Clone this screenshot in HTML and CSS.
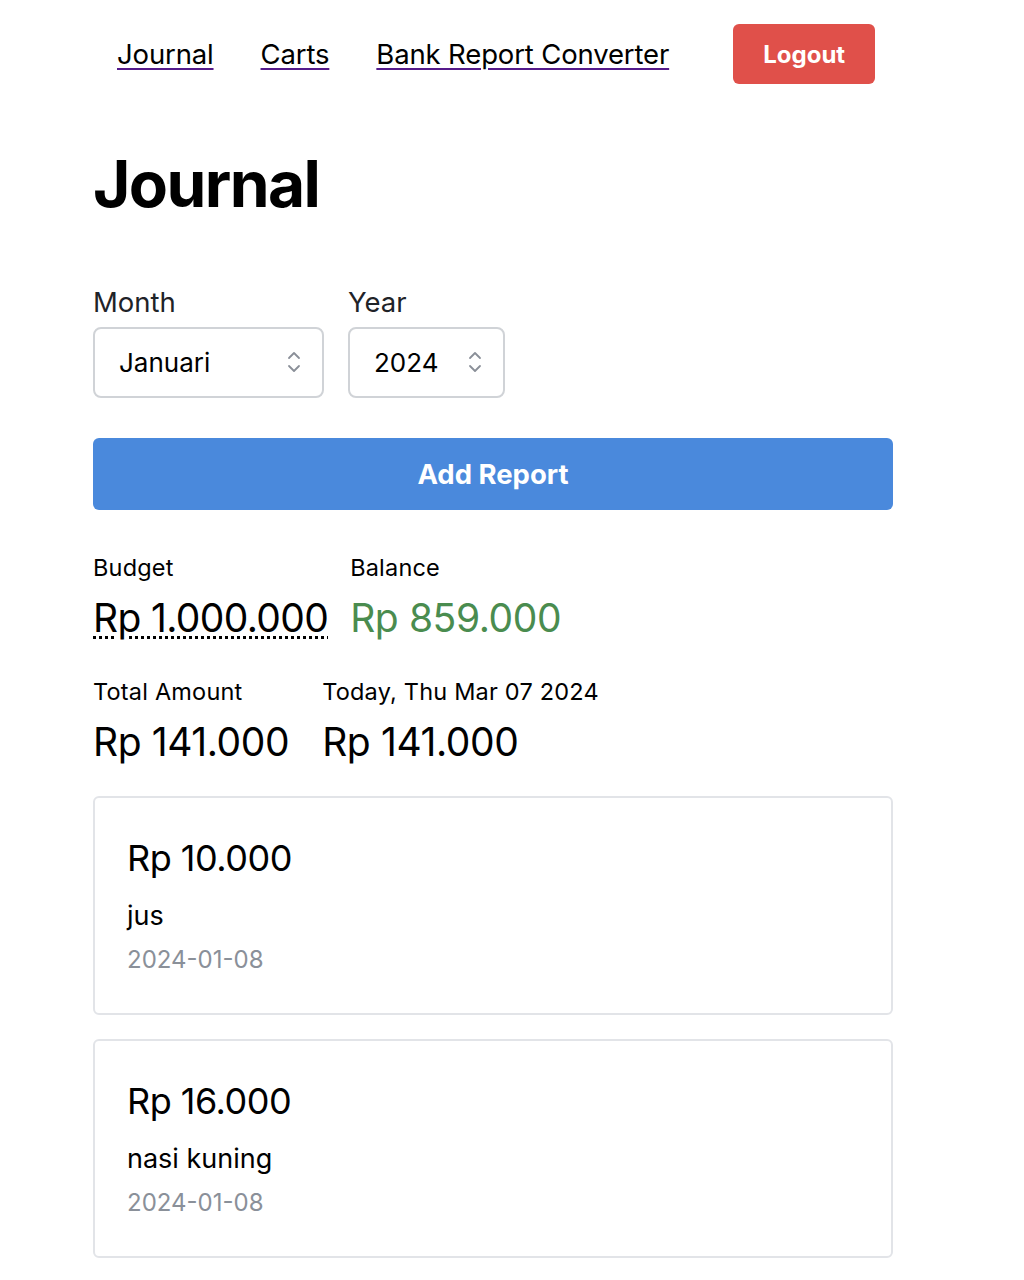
FILE: index.html
```html
<!DOCTYPE html>
<html lang="id">
<head>
    <meta charset="UTF-8">
    <meta name="viewport" content="width=device-width, initial-scale=1.0">
    <title>Journal</title>
    <link rel="stylesheet" href="styles.css">
</head>
<body>
    <div class="container">
        <nav class="nav">
            <a href="#journal" class="nav-link">Journal</a>
            <a href="#carts" class="nav-link">Carts</a>
            <a href="#converter" class="nav-link">Bank Report Converter</a>
            <button class="btn-logout">Logout</button>
        </nav>

        <h1 class="title">Journal</h1>

        <div class="filters">
            <div class="field">
                <label class="field-label">Month</label>
                <div class="select month">
                    <span>Januari</span>
                    <svg class="chevrons" width="14" height="24" viewBox="0 0 14 24" fill="none" stroke="#8a8f98" stroke-width="1.8" stroke-linecap="round" stroke-linejoin="round">
                        <polyline points="2,8 7,3 12,8"/>
                        <polyline points="2,16 7,21 12,16"/>
                    </svg>
                </div>
            </div>
            <div class="field">
                <label class="field-label">Year</label>
                <div class="select year">
                    <span>2024</span>
                    <svg class="chevrons" width="14" height="24" viewBox="0 0 14 24" fill="none" stroke="#8a8f98" stroke-width="1.8" stroke-linecap="round" stroke-linejoin="round">
                        <polyline points="2,8 7,3 12,8"/>
                        <polyline points="2,16 7,21 12,16"/>
                    </svg>
                </div>
            </div>
        </div>

        <button class="btn-add">Add Report</button>

        <div class="stats">
            <div class="stat">
                <div class="stat-label">Budget</div>
                <div class="stat-value budget">Rp 1.000.000</div>
            </div>
            <div class="stat">
                <div class="stat-label">Balance</div>
                <div class="stat-value balance">Rp 859.000</div>
            </div>
        </div>

        <div class="stats totals">
            <div class="stat">
                <div class="stat-label">Total Amount</div>
                <div class="stat-value">Rp 141.000</div>
            </div>
            <div class="stat">
                <div class="stat-label">Today, Thu Mar 07 2024</div>
                <div class="stat-value">Rp 141.000</div>
            </div>
        </div>

        <div class="card">
            <div class="card-amount">Rp 10.000</div>
            <div class="card-name">jus</div>
            <div class="card-date">2024-01-08</div>
        </div>

        <div class="card">
            <div class="card-amount">Rp 16.000</div>
            <div class="card-name">nasi kuning</div>
            <div class="card-date">2024-01-08</div>
        </div>
    </div>
</body>
</html>
```

FILE: styles.css
```css
* {
    margin: 0;
    padding: 0;
    box-sizing: border-box;
}

body {
    font-family: Inter, 'Noto Sans', sans-serif;
    background: white;
    color: #000;
}

.container {
    width: 800px;
    margin-left: 93px;
}

.nav {
    display: flex;
    align-items: center;
    padding: 24px 0 0 24px;
}

.nav-link {
    font-size: 27.5px;
    color: #000;
    text-decoration: underline;
    text-decoration-color: #551a8b;
    text-decoration-thickness: 2px;
    text-underline-offset: 4px;
    margin-right: 47px;
    letter-spacing: -0.15px;
}

.btn-logout {
    margin-left: 17px;
    width: 142px;
    height: 60px;
    background: #e0504a;
    color: white;
    border: none;
    border-radius: 6px;
    font-family: inherit;
    font-size: 24px;
    font-weight: 700;
}

.title {
    font-size: 64px;
    font-weight: 700;
    letter-spacing: -1.6px;
    margin-top: 62px;
    line-height: 1.2;
}

.filters {
    display: flex;
    gap: 24px;
    margin-top: 62px;
}

.field-label {
    display: block;
    font-size: 27.5px;
    color: #1f2328;
    margin-bottom: 8px;
}

.select {
    display: flex;
    align-items: center;
    justify-content: space-between;
    height: 71px;
    padding: 0 21px 0 24px;
    border: 2px solid #d0d3d7;
    border-radius: 8px;
    font-size: 26px;
}

.select.month { width: 231px; }
.select.year { width: 157px; }

.btn-add {
    display: block;
    width: 800px;
    height: 72px;
    margin-top: 40px;
    background: #4a89dc;
    color: white;
    border: none;
    border-radius: 6px;
    font-family: inherit;
    font-size: 27.5px;
    font-weight: 700;
}

.stats {
    display: flex;
    gap: 22px;
    margin-top: 43px;
}

.stats.totals {
    gap: 33px;
    margin-top: 36px;
}

.stat-label {
    font-size: 23.5px;
    letter-spacing: 0.2px;
}

.stat-value {
    font-size: 39px;
    margin-top: 12px;
    letter-spacing: -0.4px;
}

.stat-value.budget {
    letter-spacing: -0.65px;
    text-decoration: underline dotted;
    text-decoration-thickness: 3px;
    text-underline-offset: 4px;
}

.stat-value.balance {
    color: #4a8c4f;
}

.card {
    border: 2px solid #e2e4e8;
    border-radius: 6px;
    padding: 38px 32px 39px;
    margin-top: 31px;
}

.card + .card {
    margin-top: 24px;
}

.card-amount {
    font-size: 36px;
    letter-spacing: -0.5px;
}

.card-name {
    font-size: 27px;
    margin-top: 19px;
}

.card-date {
    font-size: 24px;
    color: #8a9099;
    margin-top: 13px;
}
```
